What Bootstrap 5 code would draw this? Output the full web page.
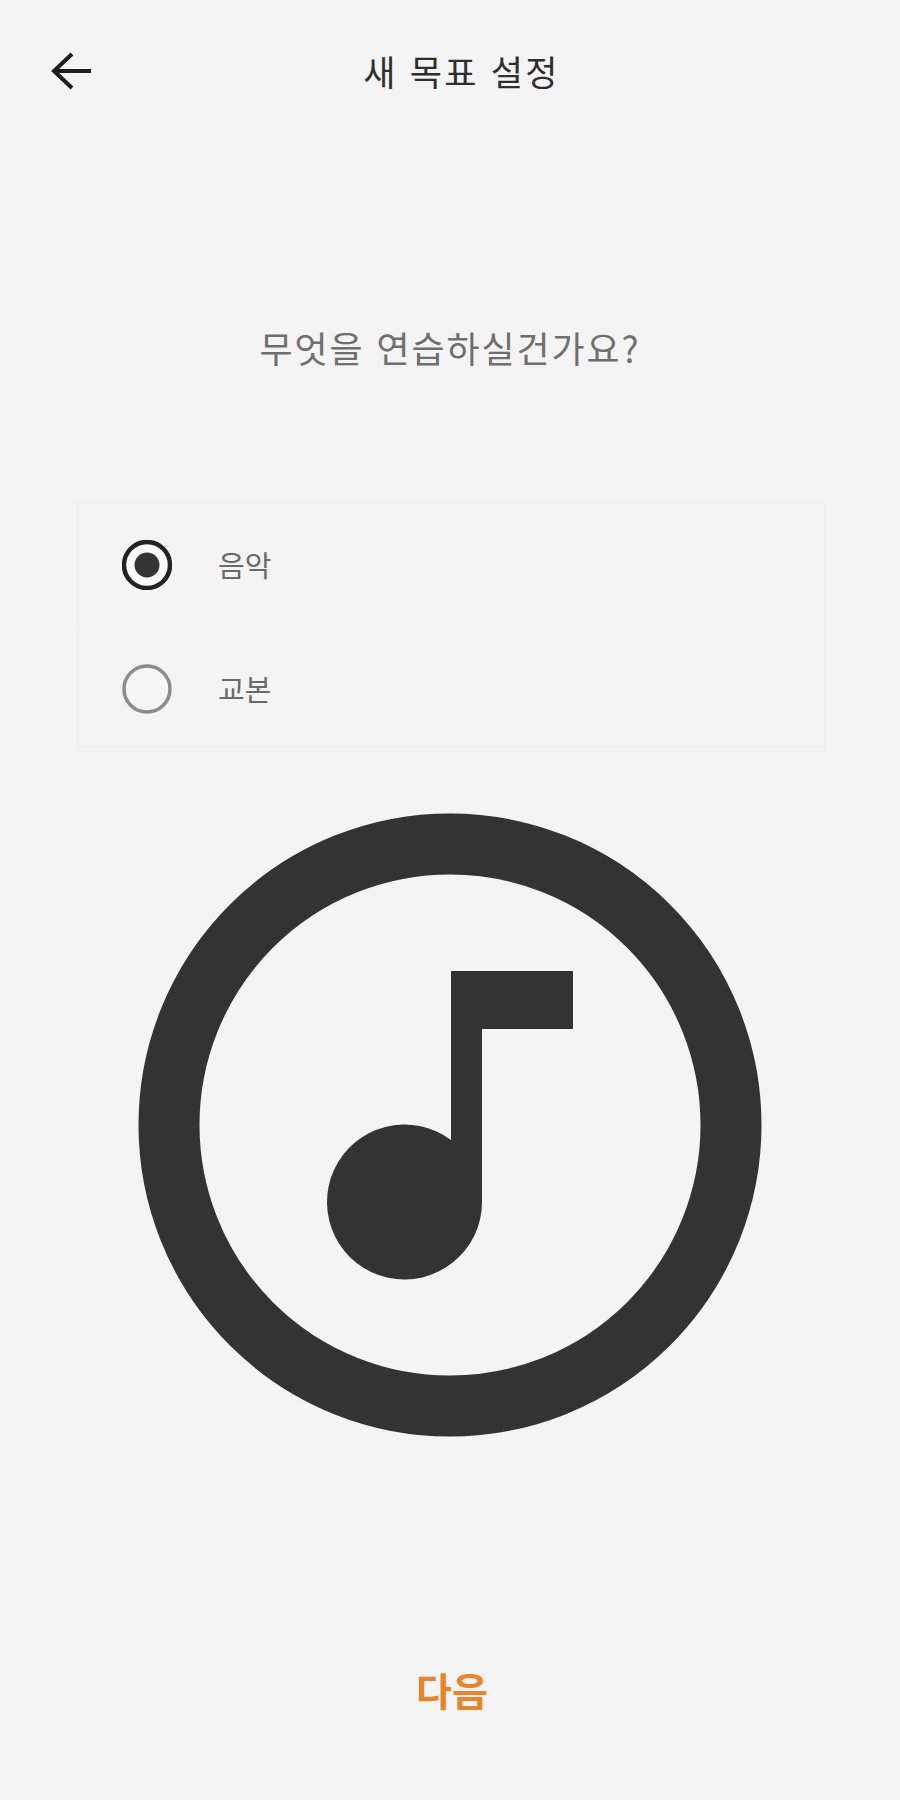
<!DOCTYPE html>
<html lang="ko">
<head>
  <meta charset="utf-8">
  <meta name="viewport" content="width=device-width, initial-scale=1">
  <title>새 목표 설정</title>

  <link href="https://cdn.jsdelivr.net/npm/bootstrap@5.3.3/dist/css/bootstrap.min.css" rel="stylesheet">
  <script src="https://cdn.jsdelivr.net/npm/bootstrap@5.3.3/dist/js/bootstrap.bundle.min.js" defer></script>

  <style>
    body {
      background: #f4f4f4;
      font-family: "Noto Sans CJK KR", "Noto Sans", sans-serif;
    }
    .screen {
      width: 900px;
      height: 1800px;
    }
    .top-bar {
      height: 246px;
      padding-top: 40px;
    }
    .back-btn {
      left: 51px;
      top: 52px;
      line-height: 0;
    }
    .top-title {
      font-size: 35px;
      line-height: 62px;
      height: 62px;
      letter-spacing: 2.3px;
      color: #2e2e2e;
      margin-left: 23px;
    }
    .question {
      font-size: 36px;
      line-height: 50px;
      height: 50px;
      letter-spacing: 1.9px;
      color: #6f6f6f;
      margin: 76px 0 0 0;
    }
    .goal-list {
      width: 748px;
      margin: 130px 0 0 77px;
      --bs-list-group-bg: #f4f4f4;
      --bs-list-group-border-color: #f0f0f0;
      --bs-list-group-border-radius: 0;
    }
    .goal-item {
      height: 125px;
      padding: 0 0 0 44px;
      gap: 46px;
      font-size: 29px;
      color: #6a6a6a;
    }
    .radio-mark {
      width: 50px;
      height: 50px;
      flex: none;
    }
    .goal-art {
      display: block;
      width: 746px;
      height: 746px;
      margin: 0 0 0 77px;
    }
    .next-row {
      margin-top: 166px;
      padding-left: 4px;
    }
    .next-btn {
      font-size: 39px;
      font-weight: 700;
      line-height: 50px;
      color: #e8842c;
      padding: 0;
      border: 0;
    }
  </style>
</head>
<body class="m-0">
  <div class="screen position-relative overflow-hidden">

    <!-- top bar -->
    <header class="top-bar position-relative">
      <a class="back-btn position-absolute" href="#" aria-label="뒤로">
        <svg width="40" height="38" viewBox="0 0 40 38" fill="none" stroke="#1e1e1e" stroke-width="4">
          <path d="M40 19H4"/>
          <path d="M21 2 3 19l18 17"/>
        </svg>
      </a>
      <div class="top-title text-center">새 목표 설정</div>
    </header>

    <p class="question text-center">무엇을 연습하실건가요?</p>

    <!-- options -->
    <div class="goal-list list-group">
      <label class="goal-item list-group-item d-flex align-items-center">
        <svg class="radio-mark" viewBox="0 0 50 50">
          <circle cx="25" cy="25" r="23" fill="#fafafa" stroke="#222" stroke-width="4.5"/>
          <circle cx="25" cy="25" r="12.5" fill="#333"/>
        </svg>
        <span>음악</span>
      </label>
      <label class="goal-item list-group-item d-flex align-items-center">
        <svg class="radio-mark" viewBox="0 0 50 50">
          <circle cx="25" cy="25" r="23" fill="#f6f6f6" stroke="#8c8c8c" stroke-width="3.5"/>
        </svg>
        <span>교본</span>
      </label>
    </div>

    <!-- music icon -->
    <svg class="goal-art" viewBox="0 0 746 746">
      <circle cx="373" cy="373" r="281" fill="none" stroke="#333" stroke-width="61"/>
      <path fill="#333" d="M374 219H496V277H405V450A77.5 77.5 0 1 1 374 388Z"/>
    </svg>

    <div class="next-row text-center">
      <button class="next-btn btn" type="button">다음</button>
    </div>
  </div>
</body>
</html>
